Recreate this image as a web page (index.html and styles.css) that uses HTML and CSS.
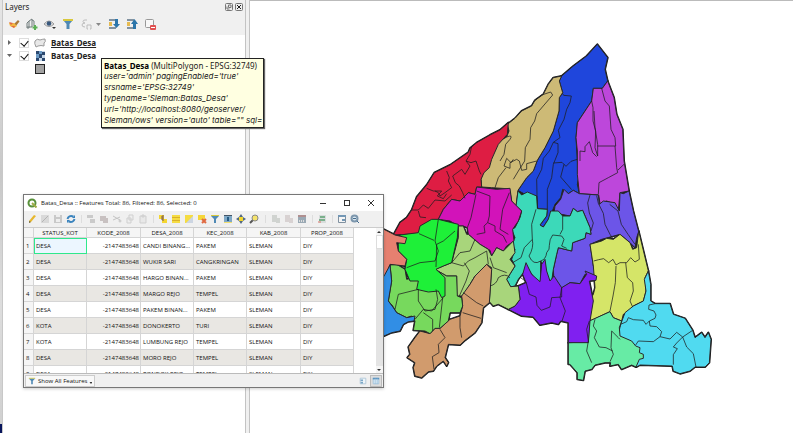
FILE: index.html
```
<!DOCTYPE html>
<html lang="en">
<head>
<meta charset="utf-8">
<title>Batas_Desa</title>
<link rel="stylesheet" href="styles.css">
</head>
<body>
<div class="app">
  <div class="edge"></div>
  <aside class="panel">
    <header class="panel-head">
      <span>Layers</span>
      <button class="mini" aria-label="Float panel"><svg viewBox="0 0 8 8"><rect x=".5" y=".5" width="7" height="7" rx="1"/><path d="M3.500 2H6v2.500H3.500zM2 3.500V6h2.500"/></svg></button>
      <button class="mini" aria-label="Close panel"><svg viewBox="0 0 8 8"><rect x=".5" y=".5" width="7" height="7" rx="1"/><path class="x" d="M2 2l4 4M6 2L2 6"/></svg></button>
    </header>
    <div class="panel-tools">
      <button class="tool" aria-label="Style"><svg viewBox="0 0 12 12"><path d="M6 6l4-4 1.500 1.500L8 8z" fill="#a8793a"/><path d="M1 5l5 0 3 3-3 2-4-2z" fill="#f2b640"/><path d="M1 4l4 1-2 2zM3 8l4 0-1 2z" fill="#e06848"/></svg></button>
      <button class="tool" aria-label="Add group"><svg viewBox="0 0 12 12" fill="none" stroke="#707c7c"><path d="M1 10V5l2-2v7zM3 3l3-2v8H1M6 2l2 1v5"/><path d="M9 7v5M6.500 9.500h5" stroke="#5bae55" stroke-width="2"/></svg></button>
      <button class="tool" aria-label="Visibility"><svg viewBox="0 0 12 12"><path d="M0 6q5-6 10 0-5 5-10 0z" fill="#ddd" stroke="#999"/><circle cx="5" cy="5.500" r="2.300" fill="#38577c"/><path d="M8 9h4l-2 2z" fill="#333"/></svg></button>
      <button class="tool" aria-label="Filter"><svg viewBox="0 0 12 12"><path d="M1 2h10L7.500 6v5h-3V6z" fill="#4f89b5"/><path d="M1 1h10v2H1z" fill="#d8c83d"/></svg></button>
      <button class="tool wide" aria-label="Expression filter"><svg viewBox="0 0 22 12" fill="none" stroke="#bcbcbc"><path d="M7 2H5Q3 2 3 3.500 3 5 5 5 2 5 2 7q0 2 3 2M8 11H7V7h4v4h-1"/><path d="M16 5h5l-2.500 3z" fill="#888" stroke="none"/></svg></button>
      <button class="tool" aria-label="Expand all"><svg viewBox="0 0 12 12"><path d="M1 1h7v2H1zM1 9h7v2H1z" fill="#8292a0"/><path d="M1 4h3v4H1z" fill="#e7bb51"/><path d="M7 1h3v5h2l-3.500 4L5 6h2z" fill="#2c76ab"/></svg></button>
      <button class="tool" aria-label="Collapse all"><svg viewBox="0 0 12 12"><path d="M1 1h7v2H1zM1 9h7v2H1z" fill="#8292a0"/><path d="M1 4h3v4H1z" fill="#e7bb51"/><path d="M7 11h3V6h2L8.500 1 5 6h2z" fill="#2c76ab"/></svg></button>
      <button class="tool" aria-label="Remove layer"><svg viewBox="0 0 12 12"><rect x="1.500" y="1.500" width="8" height="8" rx="1" fill="#f8f8f8" stroke="#999"/><rect x="6" y="7" width="6" height="5" rx="1" fill="#e05050"/><path d="M7 9.500h4" stroke="#fff"/></svg></button>
    </div>
    <div class="tree">
      <div class="layer">
        <span class="twist closed"></span>
        <label><input type="checkbox" checked><svg class="licon" viewBox="0 0 12 10"><path d="M1 3q2-3 5-1 3-1 5-1 1 3-1 4v3Q7 7 4 8L2 9Q0 5 1 3z" fill="#e8e8e8" stroke="#999"/></svg><b class="current">Batas_Desa</b></label>
      </div>
      <div class="layer">
        <span class="twist open"></span>
        <label><input type="checkbox" checked><svg class="licon" viewBox="0 0 12 10"><path d="M2 0h9v10H2z" fill="#c4d5e7"/><path d="M2 0h3v3H2zM8 1h3v3H8zM5 3h3v4H5zM2 7h3v3H2zM8 7h3v3H8z" fill="#2b486e"/><path d="M5 0h3v3H5zM2 3h3v4H2z" fill="#6c9bc5"/></svg><b>Batas_Desa</b></label>
      </div>
      <div class="swatch"></div>
    </div>
  </aside>
  <div class="splitter"></div>
  <main class="canvas">
    <svg class="map" viewBox="750 0 1629 1299" preserveAspectRatio="xMinYMin meet" role="img" aria-label="Village boundaries">
      <defs>
        <g id="districts">
          <g transform="translate(1470 90)">
            <path fill="#1f46dc" d="M322 40L353 80 345 115 353 150 337 172 310 172 305 210 262 275 258 320 262 390 268 430 262 460 268 488 250 478 235 488 218 475 212 500 195 520 185 545 175 565 160 588 150 582 170 555 172 535 143 533 140 495 105 490 84 478 110 440 130 420 142 388 165 350 190 300 207 240 208 200 218 185 208 150 215 135 250 105 290 75z"/>
            <path fill="#cdba76" d="M215 135L190 140 175 160 160 190 135 208 125 225 95 240 75 262 52 280 57 300 50 318 20 335 5 375 -15 405 -27 445 -25 468 5 470 50 473 60 482 65 510 78 525 84 478 110 440 130 420 142 388 165 350 190 300 207 240 208 200 218 185 208 150z"/>
            <path fill="#bd47db" d="M353 150L372 200 380 250 398 295 402 390 417 480 390 485 385 540 375 520 350 510 330 518 326 492 300 490 268 488 262 430 262 360 258 320 262 275 305 210 310 172 337 172z"/>
          </g>
          <g transform="translate(1470 450)">
            <path fill="#6c55e8" d="M268 128L250 118 235 128 222 115 212 145 195 165 193 180 215 190 240 195 250 172 262 182 278 178 300 230 303 250 288 245 285 262 248 275 245 300 205 290 200 310 190 355 192 390 215 412 240 395 270 398 285 370 320 372 310 345 305 310 300 280 335 265 390 250 420 275 435 290 440 260 446 242 430 180 417 120 400 128 390 125 388 180 375 155 340 150 328 160 325 132z"/>
            <path fill="#d5e568" d="M446 240L475 360 465 380 468 420 460 450 430 465 425 480 400 490 395 510 370 500 360 482 300 510 298 450 310 430 315 410 310 345 300 280 335 270 350 262 370 265 390 250 420 275 428 295 440 290z"/>
            <path fill="#3cd9b9" d="M84 120L95 132 112 123 140 135 143 173 172 175 170 195 150 222 160 228 175 205 182 180 205 180 218 195 240 195 250 172 262 182 278 178 300 230 303 250 288 245 285 262 248 275 245 300 205 290 200 310 190 355 185 390 170 385 165 350 152 330 152 392 140 390 115 355 100 365 85 385 75 405 62 408 50 385 75 345 65 325 75 295 65 280 75 260 65 235 75 230 90 200 95 180 78 165z"/>
          </g>
          <g transform="translate(1770 720)">
            <path fill="#50daf0" d="M175 90L182 130 182 180 195 188 240 188 250 220 285 232 308 268 315 290 335 275 345 290 355 275 363 295 358 365 345 378 315 378 300 390 270 398 250 390 247 375 150 372 140 378 100 320 85 280 92 250 105 215 130 195 160 180 168 150 163 115z"/>
            <path fill="#67eba5" d="M60 212L70 230 95 240 88 260 90 285 125 300 137 315 150 320 148 335 160 340 160 352 148 355 138 378 125 372 95 385 85 370 60 375 62 365 45 365 15 372 5 385 -15 390 -20 418 -38 415 -38 395 -60 370 -65 370 -65 305 -5 303 -2 240z"/>
          </g>
          <g transform="translate(1470 780)">
            <path fill="#8020f0" d="M55 145L75 135 90 115 85 75 108 65 98 40 108 5 125 40 150 62 155 10 165 -5 170 30 180 60 192 45 215 80 240 65 270 68 290 40 285 30 320 45 318 58 298 60 310 120 300 180 295 245 235 245 235 185 212 180 205 190 185 185 150 192 130 168 95 165z"/>
          </g>
          <g transform="translate(1140 330)">
            <path fill="#de1d43" d="M40 372L60 335 80 320 95 297 110 258 140 222 163 185 210 162 265 124 270 112 290 95 330 72 360 57 385 35 382 70 355 100 335 145 328 170 312 185 303 205 305 228 290 228 285 250 265 245 240 270 215 265 190 295 175 325 155 328 130 348 115 368 80 370z"/>
            <path fill="#d213b9" d="M175 325L190 295 215 265 240 270 265 245 285 250 290 228 350 235 390 232 395 270 425 300 415 330 398 355 402 390 380 405 370 420 350 410 335 435 330 418 300 400 265 370 262 350 250 345 235 345 210 330z"/>
          </g>
          <g transform="translate(1140 720)">
            <path fill="#a8d57b" d="M235 -45L250 -45 260 -20 265 -20 300 10 325 25 335 45 350 20 370 30 400 0 405 35 390 55 405 75 380 115 392 137 415 135 420 175 405 195 385 205 355 190 340 195 328 182 335 80 320 70 285 105 270 130 248 165 230 165 230 105 200 105 165 85 190 75 215 65 235 -10z"/>
            <path fill="#d19b6d" d="M320 70L335 85 328 185 310 200 305 245 285 275 255 298 240 312 205 310 195 350 205 365 200 375 190 360 170 375 160 390 145 392 125 410 105 405 100 380 105 365 82 350 90 340 85 318 105 290 120 270 150 278 165 262 180 262 210 235 240 225 248 195 245 165 270 130 285 105z"/>
            <path fill="#77d95d" d="M30 72L50 70 75 85 80 115 120 105 165 85 200 105 230 105 232 165 245 170 248 195 240 215 210 215 205 240 180 262 165 262 150 278 135 270 100 268 105 240 95 225 80 230 50 215 38 195 25 180 35 120z"/>
            <path fill="#1ef038" d="M55 10L60 -18 115 -25 120 -45 155 -65 175 -65 235 -50 232 -10 215 65 190 75 168 85 195 110 195 165 185 170 175 150 145 153 110 145 115 120 90 120 75 85 80 55 55 30z"/>
            <path fill="#e68070" d="M-10 -20L12 -35 45 -18 80 -10 75 8 50 5 55 30 80 55 75 75 30 70 10 130 -10 140z"/>
            <path fill="#318ee5" d="M-10 140L15 100 30 72 35 120 25 180 40 200 50 215 80 230 105 225 102 240 85 242 70 250 60 270 35 275 12 285 -10 290z"/>
          </g>
        </g>
      </defs>
      <use href="#districts" class="rim"/>
      <use href="#districts" class="line"/>
      <g class="in">
        <g transform="translate(1470 90)">
          <path d="M217 187L221 193 244 195 240 215 230 235 222 265 205 298 210 320 190 334 178 360 160 382 155 415 140 445 142 533M190 334L204 338 204 365 190 400 185 440 172 475 172 535M135 208L155 192 182 183 188 192 140 248 134 270 122 290 120 325 106 350 104 390 85 420 70 445M50 318Q70 310 60 325L47 340 42 370 30 390M305 210L309 230 309 270 317 300 315 350 323 375 323 340 315 290 312 240M335 172L345 210 358 225 363 295 375 320 377 345 323 345M270 390V360L285 362V347L298 332 308 365 320 377M375 345L380 410 383 425 355 440 327 455 325 490M402 400L384 417M190 396L216 394 228 406 243 391 262 385M222 400L212 438 245 476"/>
          <path d="M70 385L63 395 50 382 42 405 60 412 60 395 80 385 88 390 95 418 110 415 110 398 140 390M48 410L25 440 15 470"/>
        </g>
        <g transform="translate(1470 450)">
          <path d="M138 175L125 220 127 265 103 290 93 320 68 335M127 265Q132 290 117 315 130 345 152 330 168 325 170 305 180 295 178 283 178 265 188 252L215 255 222 265 215 285 230 292M218 195V235L210 250M300 132L293 156 298 186 310 216 303 240M320 134L325 157 340 187 345 220 360 250 370 265M359 160L384 180 394 220 414 250 435 280"/>
          <path d="M311 330L326 326 341 323 356 335 369 325 378 342 390 335 410 335 422 320 435 333 448 325 445 280M378 345L376 395 369 435 360 480M407 335L412 380 428 395 430 420 420 450 428 468"/>
        </g>
        <g transform="translate(1770 720)">
          <path d="M92 250L110 242 115 230 130 236 160 238 168 250 178 240 195 232 198 222 192 210 176 205 177 192 195 188M178 240L180 255 200 257 215 272 210 287 190 302 145 300 137 312M210 287L240 294 260 274 278 288 308 268M278 288L260 306 250 318 262 323 250 341V371M278 288L290 318 310 338 318 378M65 270L63 320 70 340 60 362M65 270L85 290 90 295M15 235L10 255 20 270 13 290 28 318 48 320 68 330M-2 240L-10 265 -5 300 -10 330 5 365"/>
        </g>
        <g transform="translate(1470 780)">
          <path d="M92 50L108 62 118 100 138 108 141 133 154 148 180 138 185 110 215 108V80L210 110 218 130 226 150 216 180M0 75Q20 70 25 50 45 35 60 50"/>
        </g>
        <g transform="translate(1140 330)">
          <path d="M275 105L270 130 258 150 273 155 288 150 298 180 303 190M258 150L270 165 255 190 245 175 218 195 226 215 238 225 248 245 255 262M200 180L208 200 205 210 215 230 195 245 180 255 175 245 165 240M140 232L160 240H185L172 255 190 263 200 248M95 297H115L130 282 145 292 165 267 195 270 215 252M115 300L120 318 138 320"/>
          <path d="M290 240L330 255 328 315 323 335M288 250L273 320 262 350M388 245L368 295 360 355 385 370M323 335L312 345 315 365 290 370M323 335L345 345V360L370 375 380 395"/>
        </g>
        <g transform="translate(1140 720)">
          <path d="M165 0L175 30 165 60 120 65 80 80M225 -30L190 0 170 10 168 78M162 -2L117 -22M175 -65L165 0M285 -5L270 30 240 35 215 65 250 75 265 60 285 50 320 30M253 65L268 90 258 120 238 165M320 30L325 70M330 50L340 80 380 95M115 145L55 160 45 205M115 145V180L135 210 165 205 173 175 168 145M190 170L155 210 130 205 105 235M130 215L158 235V270M188 170L178 260M250 155L290 185 310 195M248 215L303 232M180 265L195 290 175 310 177 335 157 347 162 385M240 225V260L245 290"/>
        </g>
      </g>
    </svg>
  </main>
</div>

<div class="tip" role="tooltip"><b>Batas_Desa</b> (MultiPolygon - EPSG:32749)<i>user='admin' pagingEnabled='true'<br>srsname='EPSG:32749'<br>typename='Sleman:Batas_Desa'<br>url='http://localhost:8080/geoserver/<br>Sleman/ows' version='auto' table="" sql=</i></div>

<section class="window">
  <header class="titlebar">
    <svg class="logo" viewBox="0 0 10 10"><circle cx="5" cy="5" r="3.500" fill="none" stroke="#58913b" stroke-width="2"/><path d="M5 5l4.500 4.500" stroke="#9eac48" stroke-width="2"/></svg>
    <h1>Batas_Desa :: Features Total: 86, Filtered: 86, Selected: 0</h1>
    <button aria-label="Minimize"><svg viewBox="0 0 8 8"><path d="M1 4.500h6"/></svg></button>
    <button aria-label="Maximize"><svg viewBox="0 0 8 8"><rect x="1.500" y="1.500" width="5" height="5"/></svg></button>
    <button aria-label="Close"><svg viewBox="0 0 8 8"><path d="M1 1l6 6M7 1L1 7"/></svg></button>
  </header>
  <div class="toolbar">
    <button aria-label="Toggle editing"><svg viewBox="0 0 10 10"><path d="M2 9l0-2 5-6 2 1-5 6z" fill="#e7b72d"/><path d="M2 9V7l2 1z" fill="#665"/></svg></button>
    <button aria-label="Multi edit"><svg viewBox="0 0 10 10"><path d="M1 1h8v8H1z" fill="#d9d9d9"/><path d="M2 8l6-6" stroke="#b5b5b5"/></svg></button>
    <button aria-label="Save"><svg viewBox="0 0 10 10"><path d="M1 1h8v8H1z" fill="#c9c9c9"/><path d="M3 1h4v2H3zM3 5h4v3H3z" fill="#eee"/></svg></button>
    <button aria-label="Reload"><svg viewBox="0 0 10 10" fill="none" stroke="#3a83bd" stroke-width="2"><path d="M1.500 5q1-4 6-2.500M8.500 5q-1 4-6 2.500"/><path d="M6 4h3V1zM4 6H1v3z" fill="#3a83bd" stroke="none"/></svg></button>
    <span class="sep"></span>
    <button aria-label="Add feature"><svg viewBox="0 0 10 10" fill="#cacaca"><path d="M1 1h6v3H1zM4 5h5v4H4z"/></svg></button>
    <button aria-label="Delete"><svg viewBox="0 0 10 10" fill="#c8c1c1"><path d="M1 2h6v5H1zM4 4h5v5H4z"/></svg></button>
    <button aria-label="Cut"><svg viewBox="0 0 10 10" fill="none" stroke="#c4c4c4"><path d="M1 2l7 4M1 6l7-3"/><circle cx="8" cy="7" r="1"/></svg></button>
    <button aria-label="Copy"><svg viewBox="0 0 10 10" fill="#eee" stroke="#cfcfcf"><path d="M4 1h4v5H4zM2 4h4v5H2z"/></svg></button>
    <button aria-label="Paste"><svg viewBox="0 0 10 10" fill="#e8e8e8" stroke="#cfcfcf"><path d="M2 2h6v7H2zM4 1h2v2H4z"/></svg></button>
    <span class="sep"></span>
    <button aria-label="Select by expression"><svg viewBox="0 0 10 10"><path d="M1 1h5v4H1zM4 5h5v4H4z" fill="#f4d631"/><path d="M6 2H4v2h2M4 4v2h2" fill="none" stroke="#755"/></svg></button>
    <button aria-label="Select all"><svg viewBox="0 0 10 10"><path d="M1 1h8v8H1z" fill="#f5dc42"/><path d="M1 3.500h8M1 6.500h8" stroke="#d9b02c"/></svg></button>
    <button aria-label="Invert selection"><svg viewBox="0 0 10 10"><path d="M1 1h8v8H1z" fill="#f5dc42"/><path d="M9 2v7H2z" fill="#ccd5e2"/></svg></button>
    <button aria-label="Deselect"><svg viewBox="0 0 10 10"><path d="M1 1h7v5H1z" fill="#f5d638"/><path d="M5 5l4 4M9 5L5 9" stroke="#e06941" stroke-width="2"/></svg></button>
    <button aria-label="Filter form"><svg viewBox="0 0 10 10"><path d="M1 2h8L6 5v4H4V5z" fill="#4f89b5"/><path d="M1 1h8v1H1z" fill="#d8c83d"/></svg></button>
    <button aria-label="Move selection to top"><svg viewBox="0 0 10 10"><path d="M1 1h8v8H1z" fill="#7fa8c6"/><path d="M1 8.500h8" stroke="#f2df70"/><path d="M1 1.500h8" stroke="#456"/><path d="M5 3v4" stroke="#245b85" stroke-width="2"/></svg></button>
    <button aria-label="Pan to rows"><svg viewBox="0 0 10 10"><path d="M5 0l2 3 3 2-3 2-2 3-2-3-3-2 3-2z" fill="#526981"/><path d="M3 3h4v4H3z" fill="#f2d62f"/></svg></button>
    <button aria-label="Zoom to rows"><svg viewBox="0 0 10 10"><path d="M1 9l3-3" stroke="#555" stroke-width="2"/><circle cx="6" cy="4" r="3" fill="#f5e36c" stroke="#888"/></svg></button>
    <span class="sep wide"></span>
    <button aria-label="New field"><svg viewBox="0 0 10 10" fill="#d0d3d0"><path d="M1 1h5v7H1zM5 4h4v5H5z"/></svg></button>
    <button aria-label="Delete field"><svg viewBox="0 0 10 10" fill="#d8d2d2"><path d="M1 1h5v7H1zM5 4h4v5H5z"/></svg></button>
    <button aria-label="Field calculator"><svg viewBox="0 0 10 10"><path d="M1 1h8v8H1z" fill="#9aa9b4"/><path d="M1 2h8" stroke="#c5776c"/><path d="M2 7h6" stroke="#ddd" stroke-width="2" stroke-dasharray="1 1"/></svg></button>
    <span class="sep"></span>
    <button aria-label="Conditional formatting"><svg viewBox="0 0 10 10"><path d="M2 1h7v8H2z" fill="#d8dddc"/><path d="M3 3h5M2 6h6" stroke="#7bb08c" stroke-width="2"/><path d="M1 8h3" stroke="#d67568"/></svg></button>
    <span class="sep"></span>
    <button aria-label="Dock table"><svg viewBox="0 0 10 10"><path d="M1.500 1.500h7v7h-7z" fill="#f5f5f5" stroke="#8091a0"/><path d="M1 2h8M5 6h3" stroke="#7397b5" stroke-width="2"/></svg></button>
    <button aria-label="Actions"><svg viewBox="0 0 10 10"><circle cx="4.500" cy="4.500" r="3" fill="#d8e5ee" stroke="#7d97ad" stroke-width="2"/><path d="M3 4.500h3M7 7l2 2" stroke="#456b8c"/></svg></button>
  </div>
  <div class="grid">
    <div class="rows">
      <table>
        <colgroup><col class="c-num"><col class="c-a"><col class="c-b"><col class="c-a"><col class="c-a"><col class="c-b"><col class="c-a"></colgroup>
        <thead><tr><th></th><th>STATUS_KOT</th><th>KODE_2008</th><th>DESA_2008</th><th>KEC_2008</th><th>KAB_2008</th><th>PROP_2008</th></tr></thead>
        <tbody>
          <tr><th>1</th><td class="focus">DESA</td><td>-2147483648</td><td>CANDI BINANG...</td><td>PAKEM</td><td>SLEMAN</td><td>DIY</td></tr>
          <tr><th>2</th><td>DESA</td><td>-2147483648</td><td>WUKIR SARI</td><td>CANGKRINGAN</td><td>SLEMAN</td><td>DIY</td></tr>
          <tr><th>3</th><td>DESA</td><td>-2147483648</td><td>HARGO BINAN...</td><td>PAKEM</td><td>SLEMAN</td><td>DIY</td></tr>
          <tr><th>4</th><td>DESA</td><td>-2147483648</td><td>MARGO REJO</td><td>TEMPEL</td><td>SLEMAN</td><td>DIY</td></tr>
          <tr><th>5</th><td>DESA</td><td>-2147483648</td><td>PAKEM BINAN...</td><td>PAKEM</td><td>SLEMAN</td><td>DIY</td></tr>
          <tr><th>6</th><td>KOTA</td><td>-2147483648</td><td>DONOKERTO</td><td>TURI</td><td>SLEMAN</td><td>DIY</td></tr>
          <tr><th>7</th><td>KOTA</td><td>-2147483648</td><td>LUMBUNG REJO</td><td>TEMPEL</td><td>SLEMAN</td><td>DIY</td></tr>
          <tr><th>8</th><td>DESA</td><td>-2147483648</td><td>MORO REJO</td><td>TEMPEL</td><td>SLEMAN</td><td>DIY</td></tr>
          <tr><th>9</th><td>DESA</td><td>-2147483648</td><td>PONDOK REJO</td><td>TEMPEL</td><td>SLEMAN</td><td>DIY</td></tr>
        </tbody>
      </table>
    </div>
    <div class="scroll"><span class="up"></span><span class="thumb"></span><span class="down"></span></div>
  </div>
  <footer class="status">
    <button class="show"><svg viewBox="0 0 10 10"><path d="M1 2h8L6 5v4H4V5z" fill="#4f89b5"/><path d="M1 1h8v1H1z" fill="#d8c83d"/></svg>Show All Features<span class="caret"></span></button>
    <button class="view" aria-label="Form view"><svg viewBox="0 0 10 10"><path d="M1.500 1.500h7v7h-7z" fill="#eef4f8" stroke="#a9c3d6"/><path d="M2 3h3v2H2zM2 6h3v2H2z" fill="#7ba7c7"/></svg></button>
    <button class="view on" aria-label="Table view"><svg viewBox="0 0 10 10"><path d="M1.500 1.500h7v7h-7z" fill="#dcebf6" stroke="#9cc0dc"/><path d="M1 2h8" stroke="#5b94c0" stroke-width="2"/><path d="M4 2v7M6.500 2v7" stroke="#9cc0dc"/></svg></button>
  </footer>
</section>
</body>
</html>
```
FILE: styles.css
```
* { box-sizing: border-box; }
body { margin: 0; background: #fff; color: #222; font: 8px/11px "Noto Sans", "Open Sans", sans-serif; }
button { margin: 0; padding: 0; border: 0; background: none; color: inherit; font: inherit; }
svg { display: block; }

.app { display: flex; height: 100vh; overflow: hidden; }
.edge { flex: none; width: 2px; background: linear-gradient(#e6e6e6 0, #c8c8c8 40%, #ddd 70%, #d0d0d0 98%, #08155c 98%); }
.panel { flex: none; width: 243px; display: flex; flex-direction: column; background: #f0f0f0; border-left: 1px solid #c8c8c8; }
.panel-head { display: flex; align-items: center; gap: 2px; height: 13px; padding: 0 2px; }
.panel-head span { flex: 1; }
.mini svg { width: 8px; height: 8px; fill: #eee; stroke: #777; }
.mini .x { stroke: #222; stroke-width: 1; }
.panel-tools { display: flex; align-items: center; gap: 6px; height: 22px; padding: 0 5px; }
.tool svg { width: 12px; height: 12px; }
.tool.wide svg { width: 22px; }
.tree { flex: 1; padding-top: 1px; background: #fff; }
.layer { display: flex; align-items: center; gap: 7px; height: 13px; padding-left: 4px; }
.layer label { display: flex; align-items: center; gap: 5px; }
.layer input { appearance: none; width: 10px; height: 10px; margin: 0; border: 1px solid #ddd; background: #fff; }
.layer input:checked::after { content: ""; display: block; width: 4px; height: 6px; margin: 0 2px; border: solid #111; border-width: 0 1px 1px 0; transform: rotate(40deg); }
.licon { width: 12px; height: 10px; }
.current { text-decoration: underline; }
.twist { width: 5px; height: 5px; background: #666; }
.closed { clip-path: polygon(20% 0, 80% 50%, 20% 100%); }
.open { clip-path: polygon(0 20%, 100% 20%, 50% 80%); }
.swatch { width: 10px; height: 10px; margin: 2px 0 0 32px; border: 1px solid #222; background: #a2a2a2; }
.splitter { flex: none; width: 5px; background: #f0f0f0; border: solid #c3c3c3; border-width: 0 1px; }
.canvas { flex: 1; min-width: 0; border-top: 1px solid #bbb; overflow: hidden; }
.map { width: 543px; max-width: none; stroke-linejoin: round; }
.rim { stroke: #151515; stroke-width: 6; }
.line { stroke: #29292b; stroke-width: 3; }
.in { fill: none; stroke: #1d1d1f; stroke-opacity: .75; stroke-width: 3; }

.tip { position: absolute; left: 101px; top: 58px; min-width: 162px; padding: 1px 1px 1px 2px; border: 1px solid #222; background: #ffffe1; box-shadow: 1px 1px 1px #666; white-space: nowrap; color: #222; }
.tip b { color: #000; }
.tip i { display: block; font-family: Inter, "Noto Sans", sans-serif; }

.window { position: absolute; left: 23px; top: 194px; width: 361px; display: flex; flex-direction: column; border: 1px solid #777; background: #f0f0f0; color: #111; font: 6px/8px "Open Sans", sans-serif; box-shadow: 0 1px 3px #0003; }
.titlebar { display: flex; align-items: center; height: 16px; padding: 0 8px 0 3px; background: #fff; }
.logo { width: 10px; height: 10px; margin-right: 4px; }
.titlebar h1 { flex: 1; margin: 0; font: inherit; }
.titlebar button { margin-left: 16px; }
.titlebar button svg { width: 8px; height: 8px; fill: none; stroke: #333; }
.toolbar { display: flex; align-items: center; gap: 3px; height: 16px; padding: 0 3px; }
.toolbar svg { width: 10px; height: 10px; }
.toolbar .sep { width: 2px; height: 8px; margin: 0 1px; border-right: 1px solid #ddd; }
.toolbar .wide { margin: 0 2px; }
.grid { display: flex; height: 147px; border-top: 1px solid #ccc; border-bottom: 1px solid #bbb; background: #fff; }
.rows { flex: 1; overflow: hidden; }
table { width: 330px; table-layout: fixed; border-collapse: separate; border-spacing: 0; }
.c-num { width: 10px; }
.c-a { width: 53px; }
.c-b { width: 54px; }
th, td { height: 16px; padding: 0 2px; border-right: 1px solid #d5d5d5; border-bottom: 1px solid #d5d5d5; font-weight: 400; text-align: left; white-space: nowrap; overflow: hidden; }
th { background: #f5f5f5; }
thead th { height: 10px; text-align: center; }
tbody tr:nth-child(even) td { background: #e9e7e3; }
td:nth-child(3) { text-align: right; padding-right: 1px; }
td.focus { padding: 0 1px; border: 1px solid #2fe88c; background: #ecf6ff; }
.scroll { width: 7px; display: flex; flex-direction: column; align-items: center; background: #e4e4e4; }
.scroll .up, .scroll .down { width: 7px; height: 7px; background: #f5f5f5; }
.scroll .up::after, .scroll .down::after { content: ""; display: block; width: 4px; height: 2px; margin: 3px 1px; background: #333; }
.scroll .up::after { clip-path: polygon(50% 0, 100% 100%, 0 100%); }
.scroll .down::after { clip-path: polygon(0 0, 100% 0, 50% 100%); }
.scroll .thumb { width: 7px; height: 14px; margin-bottom: auto; border: 1px solid #ddd; background: #fff; }
.status { display: flex; align-items: center; gap: 1px; height: 13px; padding: 0 1px; }
.show { display: flex; align-items: center; gap: 2px; height: 12px; margin-right: auto; padding: 0 2px; border: 1px solid #ccc; background: #f8f8f8; }
.show svg { width: 8px; height: 8px; }
.caret { width: 3px; height: 2px; margin-top: 5px; background: #333; clip-path: polygon(0 0, 100% 0, 50% 100%); }
.view { padding: 1px; border: 1px solid transparent; }
.view svg { width: 8px; height: 8px; }
.view.on { border-color: #bbb; background: #ddd; }
```
